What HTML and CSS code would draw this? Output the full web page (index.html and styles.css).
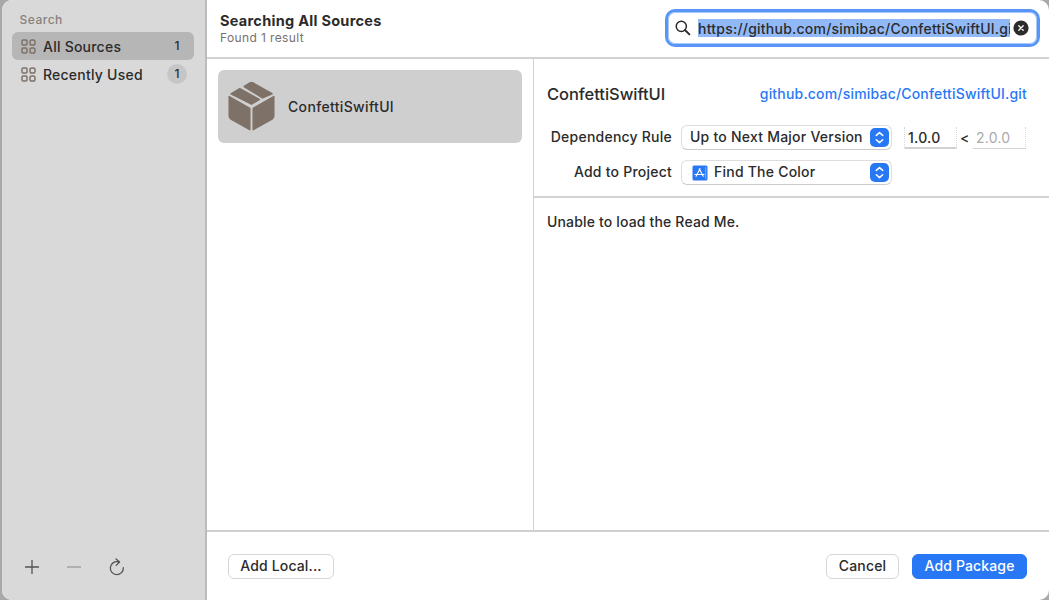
FILE: index.html
```html
<!DOCTYPE html>
<html lang="en">
<head>
<meta charset="utf-8">
<title>Add Package</title>
<link rel="stylesheet" href="styles.css">
</head>
<body>
<svg class="defs" width="0" height="0">
  <symbol id="grid" viewBox="0 0 15 15">
    <g fill="none" stroke="currentColor" stroke-width="1.5"><rect x="1" y="1" width="5" height="5" rx="1"/><rect x="9" y="1" width="5" height="5" rx="1.8"/><rect x="1" y="9" width="5" height="5" rx="1.3"/><rect x="9" y="9" width="5" height="5" rx="1.8"/></g>
  </symbol>
  <symbol id="updown" viewBox="0 0 19 19">
    <rect width="19" height="19" rx="5" fill="#2878f5"/>
    <path d="M6.3 7.4 9.5 4.6 12.7 7.4M6.3 11.8 9.5 14.6 12.7 11.8" fill="none" stroke="#fff" stroke-width="1.5" stroke-linecap="round" stroke-linejoin="round"/>
  </symbol>
</svg>
<div class="window">
  <aside class="sidebar">
    <div class="heading"><span class="t-search">Search</span></div>
    <div class="source selected"><svg class="grid-icon"><use href="#grid"/></svg><span class="name t-all">All Sources</span><span class="count">1</span></div>
    <div class="source"><svg class="grid-icon"><use href="#grid"/></svg><span class="name t-recent">Recently Used</span><span class="count badge">1</span></div>
    <div class="tools">
      <svg width="14" height="14" viewBox="0 0 14 14"><path d="M7 0v14M0 7h14" stroke="#565350" stroke-width="1.3"/></svg>
      <svg width="14" height="14" viewBox="0 0 14 14"><path d="M0 7h14" stroke="#a3a1a0" stroke-width="1.3"/></svg>
      <svg width="16" height="18" viewBox="0 0 16 18"><path d="M9.2 3.8A6.5 6.5 0 1 0 14.3 9.7M7 1l3.6 3L7.2 7.4" fill="none" stroke="#565350" stroke-width="1.3" stroke-linecap="round" stroke-linejoin="round"/></svg>
    </div>
  </aside>
  <main class="content">
    <header class="header">
      <div class="titles"><div class="title"><span class="t-title">Searching All Sources</span></div><div class="subtitle"><span class="t-found">Found 1 result</span></div></div>
      <div class="search">
        <svg width="16" height="16" viewBox="0 0 16 16"><circle cx="6.3" cy="6.3" r="5.1" fill="none" stroke="#2b2b2b" stroke-width="1.5"/><path d="m10 10 4.4 4.4" stroke="#2b2b2b" stroke-width="1.9" stroke-linecap="round"/></svg>
        <div class="query"><span class="t-query">https://github.com/simibac/ConfettiSwiftUI.git</span></div>
        <svg width="16" height="16" viewBox="0 0 16 16"><circle cx="8" cy="8" r="7.6" fill="#2b2b2b"/><path d="m5.8 5.8 4.4 4.4m0-4.4-4.4 4.4" stroke="#fff" stroke-width="1.3" stroke-linecap="round"/></svg>
      </div>
    </header>
    <div class="body">
      <section class="list">
        <div class="package">
          <svg width="47" height="51" viewBox="0 0 47 51" fill="#7e7268" stroke="#7e7268" stroke-width="1.5" stroke-linejoin="round"><path d="M1.2 15.6 21.8 27.3v21.4L3 38.2Q1.2 37 1.2 34.8ZM45.8 15.6 25.2 27.3v21.4L44 38.2q1.8-1.2 1.8-3.4ZM3 12.8 11.8 7.7 31.2 18.5 23.5 23ZM16.2 5.5 22 2q1.5-.8 3 0L44 12.7l-9.5 4.2Z"/></svg>
          <span class="t-pack">ConfettiSwiftUI</span>
        </div>
      </section>
      <section class="detail">
        <div class="info">
          <div class="info-head"><span class="t-name">ConfettiSwiftUI</span><a class="t-link">github.com/simibac/ConfettiSwiftUI.git</a></div>
          <div class="row"><div class="label"><span class="t-dep">Dependency Rule</span></div><div class="select"><span class="t-rule">Up to Next Major Version</span><svg class="updown"><use href="#updown"/></svg></div><div class="version"><span class="t-v1">1.0.0</span></div><span class="less">&lt;</span><div class="version upper"><span class="t-v2">2.0.0</span></div></div>
          <div class="row"><div class="label"><span class="t-proj">Add to Project</span></div><div class="select"><svg class="app-icon" width="16" height="16" viewBox="0 0 16 16"><rect x=".5" y=".5" width="15" height="15" rx="1.5" fill="#2878f5"/><path d="M13.7 2v12" stroke="#8fbcff" stroke-width=".8"/><path d="m8 3.7-3.9 7.5M7.3 3.7l3.9 7.5M3 9.5h6.2m1.8 0h1" fill="none" stroke="#fff" stroke-width="1.1" stroke-linecap="round"/></svg><span class="t-find">Find The Color</span><svg class="updown"><use href="#updown"/></svg></div></div>
        </div>
        <div class="readme"><span class="t-readme">Unable to load the Read Me.</span></div>
      </section>
    </div>
    <footer class="footer">
      <div class="button local"><span class="t-local">Add Local...</span></div>
      <div class="button cancel"><span class="t-cancel">Cancel</span></div>
      <div class="button primary"><span class="t-add">Add Package</span></div>
    </footer>
  </main>
</div>
</body>
</html>
```
FILE: styles.css
```css
* { box-sizing: border-box; }
body { margin: 0; width: 1049px; height: 600px; overflow: hidden; background: #aaa8a6; font: 500 14px/18px Inter, "Liberation Sans", sans-serif; letter-spacing: .23px; color: #2b2b2b; padding-left: 2px; }
.defs { position: absolute; }
svg { flex: none; display: block; }
span, a { white-space: nowrap; }
.window { display: flex; width: 1047px; height: 600px; border-radius: 10px; overflow: hidden; background: #fff; }
.sidebar { width: 205px; flex: none; display: flex; flex-direction: column; background: #dad9d9; border-right: 2px solid #bbb; padding: 11px 0 0 10px; }
.heading { height: 21px; padding-left: 7.5px; font-size: 12px; letter-spacing: .5px; color: #85817e; }
.source { width: 182px; height: 28px; border-radius: 6px; display: flex; align-items: center; padding: 0 9px; }
.name { padding-top: 1px; }
.selected { background: #b7b6b6; }
.grid-icon { width: 15px; height: 15px; color: #7e7268; margin-right: 7px; }
.count { margin-left: auto; width: 16px; text-align: center; font-size: 12px; line-height: 20px; letter-spacing: 0; }
.badge { width: 20px; margin-right: -2px; height: 20px; border-radius: 50%; background: #c7c6c6; }
.tools { margin: auto 0 23px 13px; display: flex; align-items: center; gap: 28px; height: 20px; }
.content { flex: 1; min-width: 0; display: flex; flex-direction: column; }
.header { height: 59px; border-bottom: 2px solid #d2d2d2; display: flex; justify-content: space-between; padding: 9px 9px 0 13px; }
.titles { padding-top: 3px; }
.title { font-size: 14.5px; font-weight: 700; line-height: 17px; letter-spacing: .28px; }
.subtitle { font-size: 12px; line-height: 17px; color: #77716d; font-weight: 400; letter-spacing: .38px; }
.search { width: 375px; height: 38px; border: 3px solid #5795f6; border-radius: 10px; display: flex; align-items: center; padding: 0 7px; box-shadow: inset 0 0 0 1px #a8c8fb; }
.query { width: 312px; height: 18px; line-height: 19px; overflow: hidden; background: #92b9f7; margin: 0 3px 0 7px; }
.body { flex: 1; display: flex; min-height: 0; }
.list { width: 327px; border-right: 1px solid #d2d2d2; padding: 11px; }
.package { width: 304px; height: 73px; border-radius: 6px; background: #cfcfcf; display: flex; align-items: center; padding-left: 10px; gap: 13px; }
.t-pack { padding-top: 1px; letter-spacing: .34px; }
.detail { flex: 1; min-width: 0; }
.info { height: 139px; border-bottom: 2px solid #d2d2d2; padding: 24px 22px 0 13px; }
.info-head { display: flex; justify-content: space-between; align-items: center; height: 22px; margin-bottom: 20px; }
.t-name { font-size: 16.5px; letter-spacing: -.05px; }
.t-link { color: #2878f5; letter-spacing: .19px; }
.row { display: flex; align-items: center; height: 25px; margin-bottom: 10px; }
.label { width: 125px; display: flex; justify-content: flex-end; margin-right: 9px; padding-bottom: 1px; }
.select { width: 211px; height: 25px; display: flex; align-items: center; padding: 0 2px 0 8px; border: 1px solid #dedede; border-bottom-color: #ccc; border-radius: 6px; }
.select span { padding-bottom: 1px; }
.updown { width: 19px; height: 19px; margin-left: auto; }
.app-icon { margin: 0 6px 0 2px; }
.version { width: 53px; height: 22px; margin-left: 12px; padding: 2px 0 0 3px; border: 1px dotted #d8d8d8; border-top: 0; border-bottom: 2px solid #d2d2d2; }
.less { width: 9px; margin-left: 3px; }
.upper { margin-left: 4px; border-left: 0; border-bottom-width: 1px; color: #aaa; font-weight: 400; }
.readme { padding: 15px 13px; letter-spacing: .16px; }
.footer { height: 70px; border-top: 2px solid #d0d0d0; display: flex; align-items: center; padding: 0 22px 0 21px; }
.button { height: 25px; border: 1px solid #d6d6d6; border-radius: 6px; display: flex; align-items: center; justify-content: center; padding-bottom: 1px; letter-spacing: .15px; }
.local { width: 106px; margin-right: auto; }
.cancel { width: 73px; margin-right: 13px; }
.primary { width: 115px; background: #2878f5; border-color: #2878f5; color: #fff; }
```
